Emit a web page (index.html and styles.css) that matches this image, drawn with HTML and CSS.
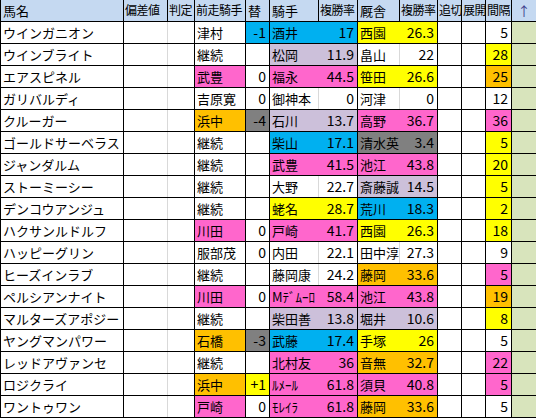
FILE: index.html
```html
<!DOCTYPE html>
<html>
<head>
	<meta charset="UTF-8">
	<title>出走馬データ</title>
	<link rel="stylesheet" href="styles.css">
</head>
<body>
	<table class="sheet">
		<colgroup>
			<col style="width:123px"><col style="width:44px"><col style="width:27px"><col style="width:51px">
			<col style="width:24px"><col style="width:49px"><col style="width:39px"><col style="width:42px">
			<col style="width:38px"><col style="width:24px"><col style="width:24px"><col style="width:26px">
			<col style="width:25px">
		</colgroup>
		<thead>
			<tr>
				<th>馬名</th><th class="tight">偏差値</th><th class="tight">判定</th><th class="tight">前走騎手</th><th>替</th>
				<th>騎手</th><th class="tight">複勝率</th><th>厩舎</th><th class="tight">複勝率</th><th class="tight">追切</th>
				<th class="tight">展開</th><th class="tight">間隔</th><th class="arrow">↑</th>
			</tr>
		</thead>
		<tbody>
			<tr><td>ウインガニオン</td><td class="s"></td><td></td><td>津村</td><td class="n cy">-1</td><td class="s cy">酒井</td><td class="n cy">17</td><td class="s ye">西園</td><td class="n ye">26.3</td><td></td><td></td><td class="n">5</td><td class="up"></td></tr>
			<tr><td>ウインブライト</td><td class="s"></td><td></td><td>継続</td><td class="n"></td><td class="s pu">松岡</td><td class="n pu">11.9</td><td class="s">畠山</td><td class="n">22</td><td></td><td></td><td class="n ye">28</td><td class="up"></td></tr>
			<tr><td>エアスピネル</td><td class="s"></td><td></td><td class="pk">武豊</td><td class="n">0</td><td class="s pk">福永</td><td class="n pk">44.5</td><td class="s ye">笹田</td><td class="n ye">26.6</td><td></td><td></td><td class="n or">25</td><td class="up"></td></tr>
			<tr><td>ガリバルディ</td><td class="s"></td><td></td><td>吉原寛</td><td class="n">0</td><td class="s">御神本</td><td class="n">0</td><td class="s">河津</td><td class="n">0</td><td></td><td></td><td class="n">12</td><td class="up"></td></tr>
			<tr><td>クルーガー</td><td class="s"></td><td></td><td class="or">浜中</td><td class="n gy">-4</td><td class="s pu">石川</td><td class="n pu">13.7</td><td class="s pk">高野</td><td class="n pk">36.7</td><td></td><td></td><td class="n pk">36</td><td class="up"></td></tr>
			<tr><td>ゴールドサーベラス</td><td class="s"></td><td></td><td>継続</td><td class="n"></td><td class="s cy">柴山</td><td class="n cy">17.1</td><td class="s gy">清水英</td><td class="n gy">3.4</td><td></td><td></td><td class="n ye">5</td><td class="up"></td></tr>
			<tr><td>ジャンダルム</td><td class="s"></td><td></td><td>継続</td><td class="n"></td><td class="s pk">武豊</td><td class="n pk">41.5</td><td class="s pk">池江</td><td class="n pk">43.8</td><td></td><td></td><td class="n ye">20</td><td class="up"></td></tr>
			<tr><td>ストーミーシー</td><td class="s"></td><td></td><td>継続</td><td class="n"></td><td class="s">大野</td><td class="n">22.7</td><td class="s pu">斎藤誠</td><td class="n pu">14.5</td><td></td><td></td><td class="n ye">5</td><td class="up"></td></tr>
			<tr><td>デンコウアンジュ</td><td class="s"></td><td></td><td>継続</td><td class="n"></td><td class="s ye">蛯名</td><td class="n ye">28.7</td><td class="s cy">荒川</td><td class="n cy">18.3</td><td></td><td></td><td class="n ye">2</td><td class="up"></td></tr>
			<tr><td>ハクサンルドルフ</td><td class="s"></td><td></td><td class="pk">川田</td><td class="n">0</td><td class="s pk">戸崎</td><td class="n pk">41.7</td><td class="s ye">西園</td><td class="n ye">26.3</td><td></td><td></td><td class="n ye">18</td><td class="up"></td></tr>
			<tr><td>ハッピーグリン</td><td class="s"></td><td></td><td>服部茂</td><td class="n">0</td><td class="s">内田</td><td class="n">22.1</td><td class="s">田中淳</td><td class="n">27.3</td><td></td><td></td><td class="n">9</td><td class="up"></td></tr>
			<tr><td>ヒーズインラブ</td><td class="s"></td><td></td><td>継続</td><td class="n"></td><td class="s">藤岡康</td><td class="n">24.2</td><td class="s or">藤岡</td><td class="n or">33.6</td><td></td><td></td><td class="n pk">5</td><td class="up"></td></tr>
			<tr><td>ペルシアンナイト</td><td class="s"></td><td></td><td class="pk">川田</td><td class="n">0</td><td class="s pk">Mﾃﾞﾑｰﾛ</td><td class="n pk">58.4</td><td class="s pk">池江</td><td class="n pk">43.8</td><td></td><td></td><td class="n or">19</td><td class="up"></td></tr>
			<tr><td>マルターズアポジー</td><td class="s"></td><td></td><td>継続</td><td class="n"></td><td class="s pu">柴田善</td><td class="n pu">13.8</td><td class="s pu">堀井</td><td class="n pu">10.6</td><td></td><td></td><td class="n ye">8</td><td class="up"></td></tr>
			<tr><td>ヤングマンパワー</td><td class="s"></td><td></td><td class="or">石橋</td><td class="n gy">-3</td><td class="s cy">武藤</td><td class="n cy">17.4</td><td class="s ye">手塚</td><td class="n ye">26</td><td></td><td></td><td class="n">5</td><td class="up"></td></tr>
			<tr><td>レッドアヴァンセ</td><td class="s"></td><td></td><td>継続</td><td class="n"></td><td class="s pk">北村友</td><td class="n pk">36</td><td class="s or">音無</td><td class="n or">32.7</td><td></td><td></td><td class="n pk">22</td><td class="up"></td></tr>
			<tr><td>ロジクライ</td><td class="s"></td><td></td><td class="or">浜中</td><td class="n ye">+1</td><td class="s pk">ﾙﾒｰﾙ</td><td class="n pk">61.8</td><td class="s pk">須貝</td><td class="n pk">40.8</td><td></td><td></td><td class="n pk">5</td><td class="up"></td></tr>
			<tr><td>ワントゥワン</td><td class="s"></td><td></td><td class="pk">戸崎</td><td class="n">0</td><td class="s pk">ﾓﾚｲﾗ</td><td class="n pk">61.8</td><td class="s or">藤岡</td><td class="n or">33.6</td><td></td><td></td><td class="n">5</td><td class="up"></td></tr>
		</tbody>
	</table>
</body>
</html>
```

FILE: styles.css
```css
/* Basic styles */
body {
	margin: 0;
	background-color: #fff;
	font-family: "Noto Sans CJK JP", sans-serif;
	font-size: 13px;
	color: #000;
}
.sheet {
	border-collapse: collapse;
	table-layout: fixed;
	width: 537px;
}
.sheet th,
.sheet td {
	box-sizing: border-box;
	border: 1px solid #000;
	padding: 0 0 0 2px;
	white-space: nowrap;
	overflow: hidden;
	text-align: left;
	font-weight: normal;
	line-height: 1;
}
.sheet th {
	height: 21px;
	border-top-style: hidden;
	background-color: #c5d9f1;
}
.sheet th.tight {
	font-size: 12px;
	letter-spacing: -0.5px;
	padding-left: 1px;
}
.sheet th.arrow {
	text-align: center;
	color: #3c3c8c;
	padding: 0;
}
.sheet td {
	height: 22px;
}

/* number cells */
.sheet td.n {
	text-align: right;
	font-size: 14px;
	padding: 0 3px 0 0;
}

/* gridline between a name and its rate */
.sheet td.s { border-right-color: #d9d9d9; }

/* cell fills */
.cy { background-color: #00b0f0; }
.pu { background-color: #ccc0da; }
.pk { background-color: #ff66cc; }
.ye { background-color: #ffff00; }
.or { background-color: #ffc000; }
.gy { background-color: #808080; }
.up { background-color: #d8e4bc; }

.sheet td.s.cy { border-right-color: #00b0f0; }
.sheet td.s.pu { border-right-color: #ccc0da; }
.sheet td.s.pk { border-right-color: #ff66cc; }
.sheet td.s.ye { border-right-color: #ffff00; }
.sheet td.s.or { border-right-color: #ffc000; }
.sheet td.s.gy { border-right-color: #808080; }
```
